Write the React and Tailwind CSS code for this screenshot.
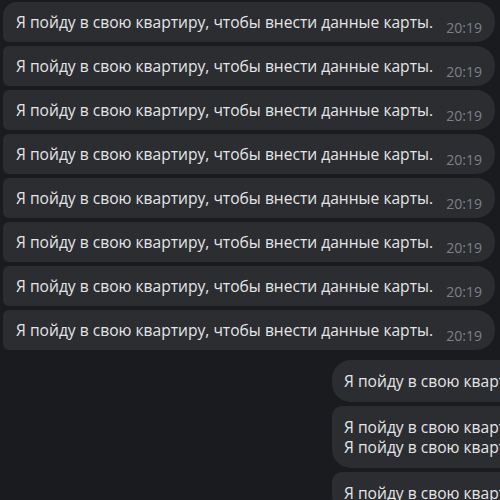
const MSG = "Я пойду в свою квартиру, чтобы внести данные карты.";

function Incoming({ first }) {
  return (
    <div
      className={`flex items-end w-[492px] h-[40px] pl-[13px] pr-[13px] pb-[5px] bg-[#2b2d31] rounded-r-[19px] ${
        first ? "rounded-tl-[14px] rounded-bl-[6px]" : "rounded-l-[6px]"
      }`}
    >
      <span className="text-[15.6px] leading-[20px] text-[#e4e5e7] mb-[5px]">{MSG}</span>
      <span className="ml-auto text-[14px] leading-[18px] text-[#7d8086]">20:19</span>
    </div>
  );
}

function Outgoing({ lines, first }) {
  return (
    <div className="pl-[332px]">
      <div
        className={`w-[400px] py-[11px] pl-[12px] bg-[#2b2d31] whitespace-nowrap rounded-l-[19px] ${
          first ? "" : "rounded-tl-[10px]"
        }`}
      >
        {Array.from({ length: lines }).map((_, i) => (
          <div key={i} className="text-[15.6px] leading-[20px] text-[#e4e5e7]">
            {MSG}
          </div>
        ))}
      </div>
    </div>
  );
}

export default function App() {
  return (
    <div
      className="w-[500px] h-[500px] overflow-hidden bg-[#1a1b1f] pt-[2px]"
      style={{ fontFamily: '"Open Sans", "Noto Sans", sans-serif' }}
    >
      <div className="flex flex-col gap-[4px] pl-[3px]">
        {Array.from({ length: 8 }).map((_, i) => (
          <Incoming key={i} first={i === 0} />
        ))}
      </div>
      <div className="flex flex-col gap-[4px] mt-[10px]">
        <Outgoing lines={1} first />
        <Outgoing lines={2} />
        <Outgoing lines={1} />
      </div>
    </div>
  );
}
